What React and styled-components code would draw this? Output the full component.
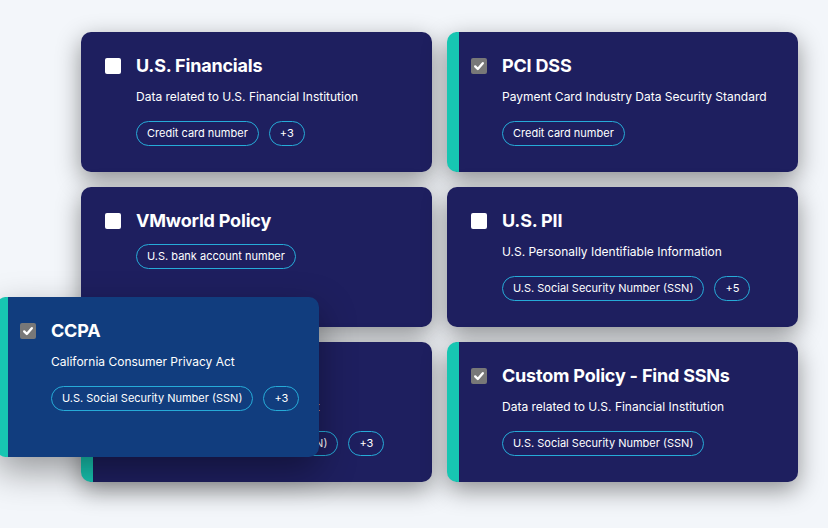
import React from 'react'
import styled, { createGlobalStyle } from 'styled-components'

const policies = [
  {
    name: 'U.S. Financials',
    desc: 'Data related to U.S. Financial Institution',
    tags: ['Credit card number'],
    more: 3,
    selected: false,
  },
  {
    name: 'PCI DSS',
    desc: 'Payment Card Industry Data Security Standard',
    tags: ['Credit card number'],
    selected: true,
  },
  {
    name: 'VMworld Policy',
    tags: ['U.S. bank account number'],
    selected: false,
  },
  {
    name: 'U.S. PII',
    desc: 'U.S. Personally Identifiable Information',
    tags: ['U.S. Social Security Number (SSN)'],
    more: 5,
    selected: false,
  },
  {
    name: 'CCPA',
    desc: 'California Consumer Privacy Act',
    tags: ['U.S. Social Security Number (SSN)'],
    more: 3,
    selected: true,
  },
  {
    name: 'Custom Policy - Find SSNs',
    desc: 'Data related to U.S. Financial Institution',
    tags: ['U.S. Social Security Number (SSN)'],
    selected: true,
  },
]

function PolicyContent({ policy }) {
  return (
    <>
      <Head>
        <Check $checked={policy.selected}>
          {policy.selected && (
            <svg width='12' height='12' viewBox='0 0 12 12'>
              <path
                d='M2.2 6.4 L4.8 9 L9.8 3.2'
                fill='none'
                stroke='white'
                strokeWidth='2.4'
                strokeLinecap='round'
                strokeLinejoin='round'
              />
            </svg>
          )}
        </Check>
        <Title>{policy.name}</Title>
      </Head>
      <Body>
        {policy.desc && <Desc>{policy.desc}</Desc>}
        <Tags>
          {policy.tags.map((t) => (
            <Tag key={t}>{t}</Tag>
          ))}
          {policy.more && <Tag>+{policy.more}</Tag>}
        </Tags>
      </Body>
    </>
  )
}

function App() {
  const dragged = policies[4]
  return (
    <Page>
      <GlobalStyle />
      <Grid>
        {policies.map((p) => (
          <Card key={p.name} $selected={p.selected}>
            <PolicyContent policy={p} />
          </Card>
        ))}
      </Grid>
      <DragCard $selected>
        <PolicyContent policy={dragged} />
      </DragCard>
    </Page>
  )
}

const GlobalStyle = createGlobalStyle`
  body {
    margin: 0;
    background: #f3f6fa;
    font-family: Inter, 'Noto Sans', sans-serif;
  }
`

const Page = styled.div`
  position: relative;
  width: 828px;
  height: 528px;
  overflow: hidden;
  padding: 32px 0 0 81px;
  box-sizing: border-box;
`

const Grid = styled.div`
  display: grid;
  grid-template-columns: 351px 351px;
  grid-auto-rows: 140px;
  gap: 15px;
`

const Card = styled.div`
  box-sizing: border-box;
  background: #1e1f5f;
  border-radius: 10px;
  padding: 22px 24px 0;
  box-shadow: 0 8px 24px rgba(0, 0, 0, 0.42);
  color: #fff;
  ${(p) =>
    p.$selected &&
    `
    border-left: 12px solid #17c6b2;
    padding-left: 12px;
  `}
`

const DragCard = styled(Card)`
  position: absolute;
  left: -4px;
  top: 297px;
  width: 323px;
  height: 160px;
  background: #113d7e;
  box-shadow: 0 14px 36px rgba(0, 0, 0, 0.38);
`

const Head = styled.div`
  display: flex;
  align-items: center;
  gap: 15px;
`

const Check = styled.div`
  width: 16px;
  height: 16px;
  flex: none;
  border-radius: 2px;
  background: ${(p) => (p.$checked ? '#787878' : '#ffffff')};
  display: flex;
  align-items: center;
  justify-content: center;
`

const Title = styled.div`
  font-size: 18px;
  font-weight: 700;
  line-height: 24px;
  letter-spacing: -0.2px;
`

const Body = styled.div`
  margin-left: 31px;
`

const Desc = styled.div`
  margin-top: 11px;
  padding-bottom: 5px;
  font-size: 12px;
  line-height: 16px;
`

const Tags = styled.div`
  display: flex;
  gap: 10px;
  margin-top: 11px;
`

const Tag = styled.div`
  box-sizing: border-box;
  height: 25px;
  padding: 0 10px;
  border: 1px solid #26abd8;
  border-radius: 13px;
  font-size: 11px;
  line-height: 23px;
  white-space: nowrap;
`

export default App
